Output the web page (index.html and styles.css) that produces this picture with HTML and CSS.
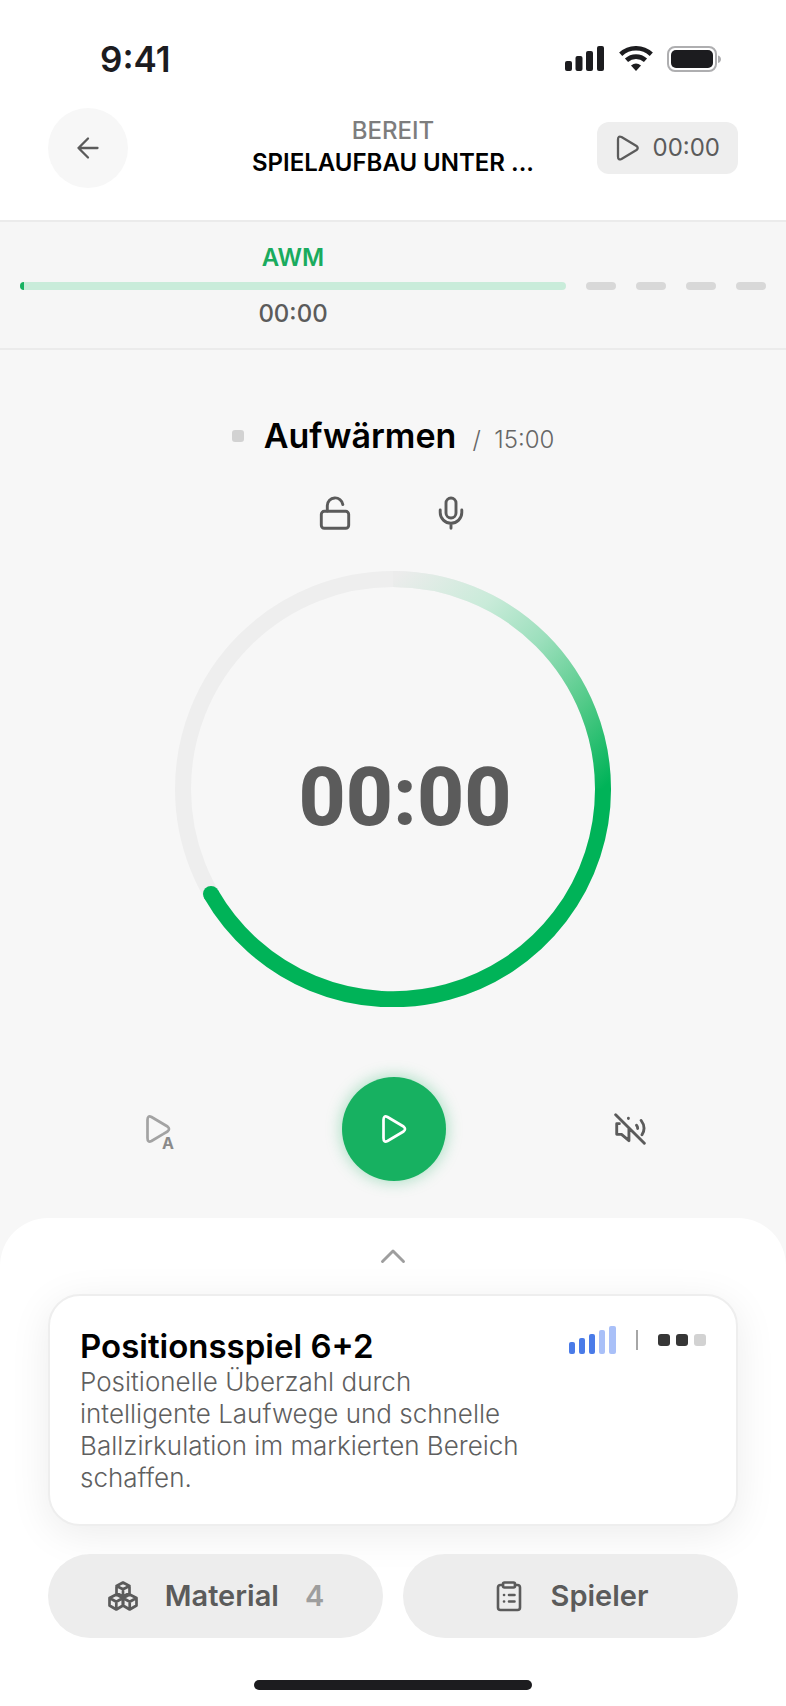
FILE: index.html
```html
<!DOCTYPE html>
<html lang="de">
<head>
<meta charset="utf-8">
<meta name="viewport" content="width=device-width, initial-scale=1">
<title>Spielaufbau – Aufwärmen</title>
<link rel="stylesheet" href="styles.css">
</head>
<body>
<div class="app">
  <div class="status">
    <span class="status-time">9:41</span>
    <div class="status-icons">
      <svg width="40" height="26" viewBox="0 0 40 26" fill="#1c1c1f" aria-hidden="true">
        <rect x="0" y="15" width="7" height="10" rx="2"/><rect x="10.500" y="10" width="7" height="15" rx="2"/><rect x="21" y="5" width="7" height="20" rx="2"/><rect x="32" y="0" width="7" height="25" rx="2"/>
      </svg>
      <svg width="34" height="26" viewBox="0 0 34 26" fill="none" stroke="#1c1c1f" stroke-width="4.600" aria-hidden="true">
        <path d="M1.700 8.300A22.500 22.500 0 0 1 32.300 8.300"/><path d="M7.500 14.300A14 14 0 0 1 26.500 14.300"/><path d="M17 25L12 19.600Q17 15.600 22 19.600Z" fill="#1c1c1f" stroke="none"/>
      </svg>
      <svg width="54" height="26" viewBox="0 0 54 26" aria-hidden="true">
        <rect x="1" y="1" width="48" height="24" rx="7" fill="none" stroke="#aeaeb0" stroke-width="2"/><rect x="4" y="4" width="42" height="18" rx="5" fill="#1c1c1f"/><path d="M51 9.500Q54 10.500 54 13.200T51 17Z" fill="#aeaeb0"/>
      </svg>
    </div>
  </div>

  <header class="header">
    <button class="back" type="button" aria-label="Zurück">
      <svg width="24" height="24" viewBox="0 0 24 24" fill="none" stroke="#5b5b5b" stroke-width="2.300" stroke-linecap="round" stroke-linejoin="round"><path d="M21.500 12H2.500M12 2.500L2.500 12L12 21.500"/></svg>
    </button>
    <div class="heading">
      <span class="heading-state">BEREIT</span>
      <h1 class="heading-title">SPIELAUFBAU UNTER ...</h1>
    </div>
    <button class="total" type="button">
      <svg width="24" height="26" viewBox="0 0 24 26" fill="none" stroke="#5b5b5b" stroke-width="2.300" stroke-linejoin="round"><path d="M2 4.500V21.500Q2 25.500 5.500 24L20.500 15Q23 13 20.500 11L5.500 2Q2 .5 2 4.500Z"/></svg>
      <span>00:00</span>
    </button>
  </header>

  <section class="timeline" aria-label="Phasen">
    <div class="phase">
      <span class="phase-name">AWM</span>
      <div class="phase-bar"><div class="phase-fill"></div></div>
      <span class="phase-time">00:00</span>
    </div>
    <div class="dash"></div>
    <div class="dash"></div>
    <div class="dash"></div>
    <div class="dash"></div>
  </section>

  <main class="main">
    <div class="exercise">
      <span class="square"></span>
      <h2 class="exercise-name">Aufwärmen</h2>
      <span class="exercise-length">/&nbsp; 15:00</span>
    </div>
    <div class="tools">
      <button class="plain" type="button" aria-label="Entsperrt">
        <svg width="32" height="34" viewBox="0 0 32 34" fill="none" stroke="#5b5b5b" stroke-width="2.900" stroke-linecap="round"><rect x="2.300" y="15.300" width="27.400" height="17" rx="3"/><path d="M8.300 15V9.500A7.800 7.800 0 0 1 23.800 8.500"/></svg>
      </button>
      <button class="plain" type="button" aria-label="Mikrofon">
        <svg width="32" height="34" viewBox="0 0 32 34" fill="none" stroke="#5b5b5b" stroke-width="2.900" stroke-linecap="round"><rect x="11" y="2" width="10" height="20" rx="5"/><path d="M5.200 14V16.500A10.800 10.800 0 0 0 26.800 16.500V14M16 28V32.300"/></svg>
      </button>
    </div>
    <div class="dial">
      <svg class="dial-ring" viewBox="0 0 436 436" fill="none" stroke-width="16" aria-hidden="true">
        <defs>
          <linearGradient id="fade" gradientUnits="userSpaceOnUse" x1="218" y1="8" x2="428" y2="218">
            <stop offset="0" stop-color="#ececec"/><stop offset=".28" stop-color="#c9ebd9"/><stop offset=".5" stop-color="#9bdfbc"/><stop offset=".75" stop-color="#52ca88"/><stop offset="1" stop-color="#00b358"/>
          </linearGradient>
        </defs>
        <circle cx="218" cy="218" r="210" stroke="#eeeeee"/>
        <path d="M218 8A210 210 0 0 1 428 218" stroke="url(#fade)"/>
        <path d="M428 217.500A210 210 0 0 1 36 323" stroke="#00b358"/>
        <circle cx="36" cy="323" r="8" fill="#00b358"/>
      </svg>
      <span class="dial-time">00:00</span>
    </div>
    <div class="controls">
      <button class="plain auto" type="button" aria-label="Automatisch starten">
        <svg width="26" height="28" viewBox="0 0 26 28" fill="none" stroke="#a3a3a3" stroke-width="2.700" stroke-linejoin="round"><path d="M18 19.200L6.500 26Q2.500 28 2.500 23V5Q2.500 0 6.500 2L22.500 11.500Q25.500 14 22.500 16.500L18 19.200"/></svg>
        <span class="auto-mark">A</span>
      </button>
      <button class="play" type="button" aria-label="Start">
        <svg width="26" height="28" viewBox="0 0 26 28" fill="none" stroke="#ffffff" stroke-width="2.700" stroke-linejoin="round"><path d="M2.500 5V23Q2.500 28 6.500 26L22.500 16.500Q25.500 14 22.500 11.500L6.500 2Q2.500 0 2.500 5Z"/></svg>
      </button>
      <button class="plain" type="button" aria-label="Stumm">
        <svg width="34" height="34" viewBox="0 0 32 32" fill="none" stroke="#5b5b5b" stroke-width="2.700" stroke-linecap="round" stroke-linejoin="round"><path d="M2.500 2.500L29.500 29.500M6 11H3.500V21H8L15 27V15.500M14.500 5.800V6.200M22.200 12.500Q23.300 14 23.200 15.500M26.500 8Q31.500 14.500 27.300 21.500"/></svg>
      </button>
    </div>
  </main>

  <section class="sheet">
    <button class="toggle" type="button" aria-label="Details öffnen">
      <svg width="26" height="16" viewBox="0 0 26 16" fill="none" stroke="#9e9e9e" stroke-width="2.900" stroke-linecap="round" stroke-linejoin="round"><path d="M2.500 13.500L13 3L23.500 13.500"/></svg>
    </button>
    <article class="card">
      <div class="card-text">
        <h2 class="card-title">Positionsspiel 6+2</h2>
        <p class="card-desc">Positionelle Überzahl durch<br>intelligente Laufwege und schnelle<br>Ballzirkulation im markierten Bereich<br>schaffen.</p>
      </div>
      <div class="meta">
        <div class="level" aria-label="Intensität 3 von 5">
          <i class="bar l1"></i><i class="bar l2"></i><i class="bar l3"></i><i class="bar l4"></i><i class="bar l5"></i>
        </div>
        <span class="divider"></span>
        <div class="squares" aria-label="Stufe 2 von 3">
          <i class="square dark"></i><i class="square dark"></i><i class="square"></i>
        </div>
      </div>
    </article>
    <div class="actions">
      <button class="action" type="button">
        <svg width="32" height="32" viewBox="0 0 32 32" fill="none" stroke="#5b5b5b" stroke-width="2.700" stroke-linejoin="round" stroke-linecap="round">
          <path d="M16 2.500L22.500 6V13L16 16.500L9.500 13V6ZM9.500 6L16 9.300L22.500 6M16 9.300V16.500"/>
          <path d="M9.300 14.500L16 18V25.500L9.300 29.500L2.500 25.500V18ZM2.500 18L9.300 21.700L16 18M9.300 21.700V29.500"/>
          <path d="M22.700 14.500L29.500 18V25.500L22.700 29.500L16 25.500V18ZM16 18L22.700 21.700L29.500 18M22.700 21.700V29.500"/>
        </svg>
        <span>Material</span>
        <span class="count">4</span>
      </button>
      <button class="action" type="button">
        <svg width="32" height="32" viewBox="0 0 32 32" fill="none" stroke="#5b5b5b" stroke-width="2.600" stroke-linejoin="round" stroke-linecap="round">
          <path d="M10 5H7.500Q5 5 5 7.500V27.500Q5 30 7.500 30H24.500Q27 30 27 27.500V7.500Q27 5 24.500 5H22"/><rect x="10" y="2.500" width="12" height="5" rx="1.500"/><path d="M11 15H11.100M16 15H21.500M11 21.500H11.100M16 21.500H21.500"/>
        </svg>
        <span>Spieler</span>
      </button>
    </div>
    <div class="home"></div>
  </section>
</div>
</body>
</html>
```
FILE: styles.css
```css
* {
  box-sizing: border-box;
}

body {
  margin: 0;
  background: #f7f7f7;
  color: #000;
  font-family: Inter, "Liberation Sans", sans-serif;
  font-size: 24px;
  line-height: 32px;
}

h1,
h2,
p {
  margin: 0;
}

button {
  border: 0;
  padding: 0;
  background: none;
  color: inherit;
  font: inherit;
  cursor: pointer;
}

svg {
  display: block;
  flex: none;
}

.app {
  display: flex;
  flex-direction: column;
  min-height: 100vh;
}

/* Status bar and header */

.status {
  display: flex;
  flex: none;
  align-items: center;
  justify-content: space-between;
  height: 108px;
  padding: 10px 65px 0 100px;
  background: #fff;
}

.status-time {
  color: #1c1c1f;
  font-size: 35px;
  font-weight: 600;
}

.status-icons {
  display: flex;
  gap: 14px;
}

.header {
  display: grid;
  flex: none;
  grid-template-columns: 1fr auto 1fr;
  align-items: center;
  padding: 0 48px 32px;
  border-bottom: 2px solid #ebebeb;
  background: #fff;
}

.back {
  display: grid;
  place-items: center;
  width: 80px;
  height: 80px;
  border-radius: 50%;
  background: #f7f7f7;
}

.heading {
  display: flex;
  flex-direction: column;
  padding-bottom: 3px;
  text-align: center;
}

.heading-state {
  color: #7d7d7d;
  font-weight: 500;
}

.heading-title {
  font-size: 24px;
  font-weight: 600;
}

.total {
  display: flex;
  align-items: center;
  justify-self: end;
  gap: 13px;
  height: 52px;
  padding: 0 18px 0 19px;
  border-radius: 12px;
  background: #eee;
  color: #5b5b5b;
}

/* Phase timeline */

.timeline {
  display: grid;
  grid-template-columns: 1fr repeat(4, 30px);
  align-items: center;
  gap: 20px;
  height: 128px;
  padding: 2px 20px 0;
  border-bottom: 2px solid #ebebeb;
  background: #f6f6f6;
  font-weight: 600;
}

.phase {
  display: grid;
  gap: 8px;
  text-align: center;
}

.phase-name {
  color: #1aab5e;
}

.phase-bar {
  height: 8px;
  border-radius: 4px;
  overflow: hidden;
  background: #c9ecda;
}

.phase-fill {
  width: 4px;
  height: 100%;
  background: #17b161;
}

.phase-time {
  color: #5b5b5b;
  font-weight: 500;
}

.dash {
  height: 8px;
  border-radius: 4px;
  background: #d8d8d8;
}

/* Timer */

.main {
  display: flex;
  flex: 1 0 auto;
  flex-direction: column;
  align-items: center;
  padding: 66px 0 36px;
}

.exercise {
  display: flex;
  align-items: baseline;
  height: 40px;
  line-height: 40px;
}

.exercise-name {
  margin: 0 16px 0 20px;
  font-size: 34px;
  font-weight: 600;
}

.exercise-length {
  color: #666;
  font-weight: 300;
}

.square {
  width: 12px;
  height: 12px;
  border-radius: 3px;
  background: #d2d2d2;
}

.exercise .square {
  align-self: center;
}

.square.dark {
  background: #363636;
}

.tools {
  display: flex;
  gap: 60px;
  margin: 35px 0 36px;
}

.plain {
  display: grid;
  place-items: center;
  width: 56px;
  height: 44px;
}

.dial {
  display: grid;
  place-items: center;
  width: 436px;
  max-width: 100%;
}

.dial-ring,
.dial-time {
  grid-area: 1 / 1;
}

.dial-ring {
  width: 100%;
}

.dial-time {
  padding: 16px 0 0 24px;
  color: #5b5b5b;
  font-family: Roboto, "Liberation Sans", sans-serif;
  font-size: 82px;
  font-weight: 800;
  line-height: 80px;
}

.controls {
  display: flex;
  align-items: center;
  justify-content: space-between;
  width: 100%;
  max-width: 786px;
  margin-top: 70px;
  padding: 0 128px 0 130px;
}

.auto {
  position: relative;
}

.auto-mark {
  position: absolute;
  right: 12px;
  bottom: 0;
  color: #8a8a8a;
  font-size: 16px;
  font-weight: 700;
  line-height: 16px;
}

.play {
  display: grid;
  place-items: center;
  width: 104px;
  height: 104px;
  border-radius: 50%;
  background: #17b161;
  box-shadow: 0 0 16px rgba(23, 177, 97, 0.4);
}

/* Bottom sheet */

.sheet {
  display: flex;
  flex: none;
  flex-direction: column;
  padding: 0 48px 16px;
  border-radius: 48px 48px 0 0;
  background: #fff;
}

.toggle {
  display: grid;
  place-items: center;
  align-self: center;
  width: 80px;
  height: 76px;
}

.card {
  display: flex;
  align-items: flex-start;
  justify-content: space-between;
  padding: 30px;
  border: 2px solid #eee;
  border-radius: 32px;
  background: #fff;
  box-shadow: 0 8px 40px rgba(0, 0, 0, 0.08);
}

.card-text {
  flex: 0 1 464px;
}

.card-title {
  font-size: 33px;
  font-weight: 600;
  line-height: 40px;
}

.card-desc {
  color: #5f5f5f;
  font-size: 26px;
  font-weight: 300;
}

.meta {
  display: flex;
  align-items: center;
  gap: 20px;
}

.level {
  display: flex;
  align-items: flex-end;
  gap: 4px;
  height: 28px;
}

.bar {
  width: 6px;
  border-radius: 2px;
  background: #4a7be8;
}

.l1 {
  height: 12px;
}

.l2 {
  height: 16px;
}

.l3 {
  height: 20px;
}

.l4 {
  height: 24px;
  background: #a9c0f8;
}

.l5 {
  width: 7px;
  height: 28px;
  background: #a9c0f8;
}

.divider {
  width: 2px;
  height: 20px;
  background: #a6a6a6;
}

.squares {
  display: flex;
  gap: 6px;
}

.actions {
  display: grid;
  grid-template-columns: 1fr 1fr;
  gap: 20px;
  margin: 28px 0 42px;
}

.action {
  display: flex;
  align-items: center;
  justify-content: center;
  gap: 26px;
  height: 84px;
  border-radius: 42px;
  background: #ededed;
  color: #5b5b5b;
  font-size: 29px;
  font-weight: 600;
}

.count {
  color: #9e9e9e;
}

.home {
  align-self: center;
  width: 278px;
  max-width: 100%;
  height: 10px;
  border-radius: 5px;
  background: #1c1c1f;
}
```
